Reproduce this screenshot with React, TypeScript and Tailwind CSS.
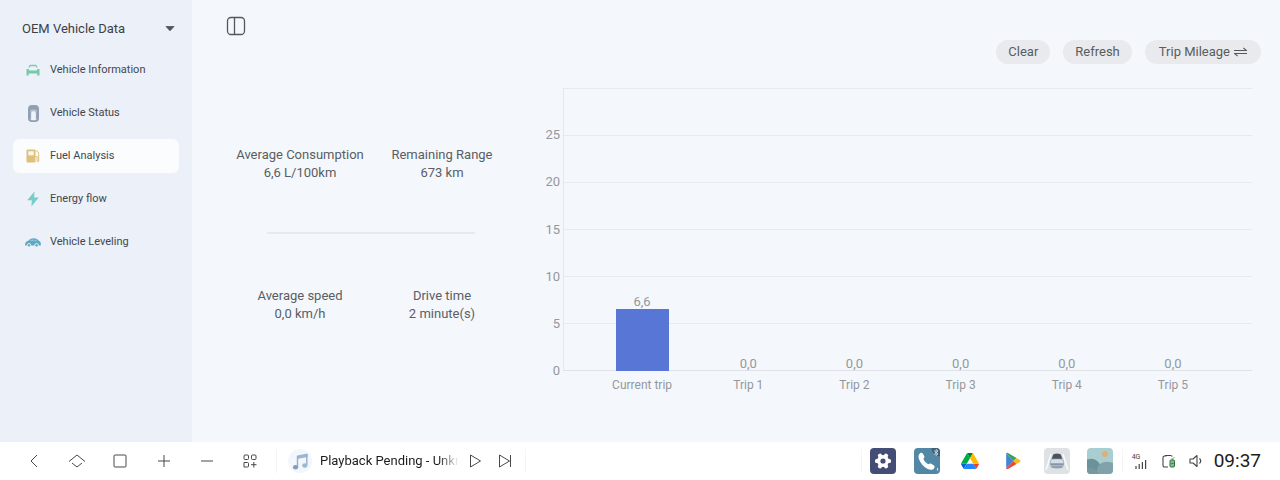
import React, { useState } from 'react'

const ICON = 'shrink-0'

const CarFrontIcon = () => (
  <svg className={ICON} width="18" height="18" viewBox="0 0 18 18" fill="none">
    <path d="M5.200 6 6 4.500h6L12.800 6" stroke="#7fcbb0" strokeWidth="1.400" strokeLinecap="round" strokeLinejoin="round" />
    <path d="M2.500 8h2l1 1.500h7l1-1.500h2v6.500h-2.200v-2H4.700v2H2.500z" fill="#78c8aa" />
  </svg>
)

const CarTopIcon = () => (
  <svg className={ICON} width="18" height="18" viewBox="0 0 18 18">
    <rect x="4" y="1" width="11" height="17" rx="4" fill="#929eb2" />
    <path d="M6 6.500c1.800-1.300 5.200-1.300 7 0L12.200 9v5l.8 1.500c-1.700 1.400-5.300 1.400-7 0l.8-1.500V9z" fill="#b9c3d2" />
    <path d="M7.200 16V9.500a2.300 2.300 0 0 1 4.600 0V16z" fill="#eef2f9" />
  </svg>
)

const FuelIcon = () => (
  <svg className={ICON} width="18" height="18" viewBox="0 0 18 18" fill="none">
    <path d="M3 3h8v12H3z" fill="#dfc27a" stroke="#dcc07a" strokeWidth="1" strokeLinejoin="round" />
    <path d="M4.300 4.300h5.400v4H4.300z" fill="#fbf7ea" />
    <path d="M12 3.500c1.600.6 2.700 2 2.700 4V14c0 1-1.600 1-1.600 0V9.500H11.500" stroke="#dcc07a" strokeWidth="1" />
  </svg>
)

const BoltIcon = () => (
  <svg className={ICON} width="18" height="18" viewBox="0 0 18 18">
    <path d="M10.400 1.500 3.200 10.200h4.600l-.4 6.300L14.800 7.600h-4.600z" fill="#7accc8" />
  </svg>
)

const CarSideIcon = () => (
  <svg className={ICON} width="18" height="18" viewBox="0 0 18 18">
    <path d="M1 12.600c0-3 1-4.300 3.400-4.800 2-2.200 4-2.800 6.600-2.400 2 .3 3.200 1.300 4.200 2.600 1.400.6 1.800 2 1.600 4.600z" fill="#5fa8c2" />
    <path d="M6 7.900c1-1 2.200-1.400 3.400-1.400v1.700zM10.300 6.500c1.200.1 2.200.7 2.900 1.600l-2.900.1z" fill="#8fc5d8" />
    <circle cx="5" cy="12.300" r="1.800" fill="#66adc6" stroke="#ecf1f9" strokeWidth=".9" />
    <circle cx="12.600" cy="12.300" r="1.800" fill="#66adc6" stroke="#ecf1f9" strokeWidth=".9" />
  </svg>
)

const menu = [
  { label: 'Vehicle Information', icon: <CarFrontIcon /> },
  { label: 'Vehicle Status', icon: <CarTopIcon /> },
  { label: 'Fuel Analysis', icon: <FuelIcon /> },
  { label: 'Energy flow', icon: <BoltIcon /> },
  { label: 'Vehicle Leveling', icon: <CarSideIcon /> },
]

const trips = [
  { label: 'Current trip', value: 6.6 },
  { label: 'Trip 1', value: 0 },
  { label: 'Trip 2', value: 0 },
  { label: 'Trip 3', value: 0 },
  { label: 'Trip 4', value: 0 },
  { label: 'Trip 5', value: 0 },
]

const CHART_MAX = 30
const ticks = [25, 20, 15, 10, 5, 0]

const formatValue = (value: number) => value.toFixed(1).replace('.', ',')

interface SidebarProps {
  active: string
  onSelect: (label: string) => void
}

const Sidebar: React.FC<SidebarProps> = ({ active, onSelect }) => (
  <aside className="w-48 shrink-0 bg-[#ebf0f9] px-[13px] pt-[17px]">
    <div className="flex items-center">
      <select
        aria-label="Data source"
        className="h-6 min-w-0 flex-1 appearance-none bg-transparent pl-[9px] text-[13px] text-[#3d4147] outline-none"
      >
        <option>OEM Vehicle Data</option>
      </select>
      <svg className="mr-1" width="10" height="6" viewBox="0 0 10 6">
        <path d="M1 .5h8L5 4.800z" fill="#505357" stroke="#505357" strokeWidth=".8" strokeLinejoin="round" />
      </svg>
    </div>
    <nav className="mt-3 flex flex-col gap-[9px]">
      {menu.map((item) => (
        <button
          key={item.label}
          onClick={() => onSelect(item.label)}
          className={`flex h-[34px] items-center gap-2 rounded-md pl-[11px] text-left text-[11px] text-[#43474d] ${
            item.label === active ? 'bg-[#fbfcfe]' : ''
          }`}
        >
          {item.icon}
          <span>{item.label}</span>
        </button>
      ))}
    </nav>
  </aside>
)

const Stat: React.FC<{ label: string; value: string }> = ({ label, value }) => (
  <div className="text-center text-[13px] leading-[18px] whitespace-nowrap text-[#5a5e63]">
    <p>{label}</p>
    <p>{value}</p>
  </div>
)

const Stats = () => (
  <section className="w-[284px] shrink-0 pt-[58px]">
    <div className="grid grid-cols-2">
      <Stat label="Average Consumption" value="6,6 L/100km" />
      <Stat label="Remaining Range" value="673 km" />
    </div>
    <hr className="mx-[38px] mt-[50px] mb-[53px] border-t-2 border-[#e6e9ee]" />
    <div className="grid grid-cols-2">
      <Stat label="Average speed" value="0,0 km/h" />
      <Stat label="Drive time" value="2 minute(s)" />
    </div>
  </section>
)

const TripChart = () => (
  <section className="flex flex-1 text-[13px] text-[#94979b]">
    <div className="flex w-[50px] shrink-0 flex-col pb-[23px]">
      {ticks.map((tick) => (
        <div key={tick} className="flex flex-1 items-end justify-end pr-[3px]">
          <span className="-mb-2 leading-4">{tick}</span>
        </div>
      ))}
    </div>
    <div className="flex flex-1 flex-col">
      <div className="grid flex-1">
        <div className="col-start-1 row-start-1 flex flex-col border-b border-l border-b-[#dfe2e7] border-l-[#e5e9ee]">
          {ticks.map((tick) => (
            <div key={tick} className="flex-1 border-t border-[#e7ebf0]" />
          ))}
        </div>
        <div className="col-start-1 row-start-1 flex px-[26px]">
          {trips.map((trip) => (
            <div key={trip.label} className="flex flex-1 flex-col items-center justify-end">
              <span className="leading-[14px]">{formatValue(trip.value)}</span>
              <div className="w-1/2 bg-[#5776d6]" style={{ height: `${(trip.value / CHART_MAX) * 100}%` }} />
            </div>
          ))}
        </div>
      </div>
      <div className="mt-[5px] flex px-[26px] text-center text-xs leading-[18px]">
        {trips.map((trip) => (
          <span key={trip.label} className="flex-1">
            {trip.label}
          </span>
        ))}
      </div>
    </div>
  </section>
)

const PILL = 'h-6 rounded-full bg-[#e8eaed] text-[13px] text-[#595c60]'

const Toolbar = () => (
  <header className="flex items-start justify-between pr-[19px] pl-[34px]">
    <button aria-label="Toggle sidebar" className="mt-4">
      <svg width="20" height="20" viewBox="0 0 20 20" fill="none" stroke="#54575c" strokeWidth="1.300">
        <rect x="1.500" y="1.500" width="17" height="17" rx="3.500" />
        <path d="M8.500 1.500v17" />
      </svg>
    </button>
    <div className="mt-10 flex gap-[13px]">
      <button className={`${PILL} px-3`}>Clear</button>
      <button className={`${PILL} px-3`}>Refresh</button>
      <button className={`${PILL} flex items-center gap-1 px-[14px]`}>
        Trip Mileage
        <svg width="13" height="10" viewBox="0 0 13 10" fill="none" stroke="#55585c" strokeWidth="1.100">
          <path d="M0 3.500h12.500L9.300.8M13 6.500H.5l3.200 2.700" />
        </svg>
      </button>
    </div>
  </header>
)

const line = { fill: 'none', stroke: '#47484b', strokeWidth: 1, width: 18, height: 18, viewBox: '0 0 18 18' }

const systemButtons = [
  { label: 'Back', icon: <svg {...line}><path d="M12 3 6 9l6 6" /></svg> },
  { label: 'Home', icon: <svg {...line}><path d="M1 9.500 9 3l8 6.500M4 11l5 4 5-4" /></svg> },
  { label: 'Recent apps', icon: <svg {...line}><rect x="3" y="3" width="12" height="12" rx="1" /></svg> },
  { label: 'Increase', icon: <svg {...line}><path d="M9 3v12M3 9h12" /></svg> },
  { label: 'Decrease', icon: <svg {...line}><path d="M3 9h12" /></svg> },
  {
    label: 'Add widget',
    icon: (
      <svg {...line}>
        <rect x="3" y="3" width="4.500" height="4.500" rx="1" />
        <rect x="10.500" y="3" width="4.500" height="4.500" rx="1" />
        <path d="M3 10.500h3.500a1 1 0 0 1 1 1V14a1 1 0 0 1-1 1H3zM12.800 10v5.500M10 12.700h5.500" />
      </svg>
    ),
  },
]

const SettingsApp = () => (
  <svg width="26" height="26" viewBox="0 0 26 26">
    <rect width="26" height="26" rx="4" fill="#434d75" />
    <g fill="#fff">
      <circle cx="13" cy="13" r="6" />
      <rect x="11" y="5" width="4" height="16" rx="1.500" transform="rotate(30 13 13)" />
      <rect x="11" y="5" width="4" height="16" rx="1.500" transform="rotate(90 13 13)" />
      <rect x="11" y="5" width="4" height="16" rx="1.500" transform="rotate(150 13 13)" />
    </g>
    <circle cx="13" cy="13" r="2.600" fill="#434d75" />
  </svg>
)

const PhoneApp = () => (
  <svg width="26" height="26" viewBox="0 0 26 26">
    <rect width="26" height="26" rx="4" fill="#5288a5" />
    <path d="M17.500 0H22a4 4 0 0 1 4 4v4.500a8.500 8.500 0 0 1-8.500-8.500z" fill="#3f6178" />
    <path d="m20 2.500 4 3.500-2 1.500v-6l2 1.500-4 3.500" fill="none" stroke="#dcebf3" strokeWidth=".8" />
    <path
      d="M5.200 6.200c1.300-1.800 2.900-1.800 3.900-.2l1.100 2c.6 1.200.1 1.900-.8 2.700.8 2.300 2.700 4.500 5 5.600 1-.9 1.800-1.200 2.800-.6l2.500 1.600c1.300 1 1.200 2.500-.2 3.600-1.700 1.300-4 1-6.200-.2-3.800-2.100-6.900-5.600-8.300-9.500-.7-2-.7-3.700.2-5z"
      fill="#fff"
    />
    <path d="M23.500 20v2.500" stroke="#dcebf3" strokeWidth="1" />
  </svg>
)

const DriveApp = () => (
  <svg width="18" height="16" viewBox="0 0 87.300 78">
    <path d="m6.600 66.850 3.850 6.650c.8 1.400 1.950 2.500 3.300 3.300l13.750-23.800h-27.500c0 1.550.4 3.100 1.200 4.500z" fill="#0066da" />
    <path d="m43.650 25-13.750-23.800c-1.350.8-2.500 1.900-3.300 3.300l-25.400 44a9.060 9.060 0 0 0 -1.200 4.500h27.500z" fill="#00ac47" />
    <path d="m73.550 76.800c1.350-.8 2.500-1.900 3.300-3.300l1.600-2.750 7.650-13.250c.8-1.400 1.200-2.950 1.200-4.500h-27.502l5.852 11.500z" fill="#ea4335" />
    <path d="m43.650 25 13.750-23.800c-1.350-.8-2.900-1.200-4.500-1.200h-18.500c-1.600 0-3.150.45-4.500 1.200z" fill="#00832d" />
    <path d="m59.800 53h-32.300l-13.750 23.800c1.350.8 2.900 1.200 4.500 1.200h50.800c1.600 0 3.150-.45 4.500-1.200z" fill="#2684fc" />
    <path d="m73.400 26.500-12.700-22c-.8-1.400-1.950-2.500-3.300-3.300l-13.750 23.800 16.150 28h27.450c0-1.550-.4-3.100-1.200-4.500z" fill="#ffba00" />
  </svg>
)

const PlayStoreApp = () => (
  <svg width="16" height="18" viewBox="0 0 16 18">
    <path d="M1.200 1.500v15L8.500 9z" fill="#4285d4" />
    <path d="M1.200 1.500C1.500.6 2.300.6 3 1l8.500 4.900L8.500 9z" fill="#35a35a" />
    <path d="M1.200 16.500c.3.900 1.100.9 1.800.5l8.500-4.900L8.500 9z" fill="#e8473c" />
    <path d="m11.500 5.900 3.300 2c1 .6 1 1.600 0 2.200l-3.300 2L8.500 9z" fill="#f8bd1c" />
  </svg>
)

const VehicleApp = () => (
  <svg width="26" height="26" viewBox="0 0 26 26">
    <rect width="26" height="26" rx="4" fill="#dfe2e5" />
    <path d="M7 6 2 22M19 6l5 16" stroke="#f9fafb" strokeWidth="1.400" />
    <path d="M9 6.500C10 5 16 5 17 6.500l2 5c1.500 1 1.500 6 0 8-2 1.500-10 1.500-12 0-1.500-2-1.500-7 0-8z" fill="#aab6c2" />
    <path d="M9.300 6.500c1.200-1 6.200-1 7.400 0l1.500 4.300H7.800z" fill="#4c535b" />
    <path d="M7.500 11.800c3-.8 8-.8 11 0l.8 3.700H6.700z" fill="#d4dee7" />
    <path d="M6.500 15.500h13v1.200h-13z" fill="#77879a" />
    <path d="M8 18.500h10v1H8z" fill="#7d8b9b" />
  </svg>
)

const GalleryApp = () => (
  <svg width="26" height="26" viewBox="0 0 26 26">
    <defs>
      <clipPath id="gallery">
        <rect width="26" height="26" rx="4" />
      </clipPath>
    </defs>
    <g clipPath="url(#gallery)">
      <rect width="26" height="26" fill="#a9cdd1" />
      <circle cx="18" cy="6" r="3" fill="#e0af78" />
      <path d="M0 11.500c8-3 14 2 16 14.500H0z" fill="#6b9299" />
      <path d="M11 18c4-5 10-5 15-3v11H9z" fill="#7fa3a9" />
      <path d="M0 20c6-1 9 2 12 6H0z" fill="#76999f" />
    </g>
  </svg>
)

const apps = [
  { label: 'Settings', icon: <SettingsApp /> },
  { label: 'Phone', icon: <PhoneApp /> },
  { label: 'Drive', icon: <DriveApp /> },
  { label: 'Play Store', icon: <PlayStoreApp /> },
  { label: 'Vehicle', icon: <VehicleApp /> },
  { label: 'Gallery', icon: <GalleryApp /> },
]

const Divider = () => <div className="h-6 w-px shrink-0 bg-[#f3f4f6]" />

const MediaControls = () => (
  <div className="flex items-center">
    <svg className="mr-2 ml-[11px] shrink-0" width="24" height="24" viewBox="0 0 24 24">
      <circle cx="12" cy="12" r="12" fill="#f3f7fb" />
      <path d="M9 6.500 19.500 4.500V8L9 10z" fill="#9db4d2" />
      <path d="M9.500 7v11M18.800 5v11" stroke="#94aed0" strokeWidth="1.400" />
      <ellipse cx="7.500" cy="18.200" rx="2.600" ry="2.200" fill="#809dc6" />
      <ellipse cx="16.800" cy="16.500" rx="2.600" ry="2.200" fill="#9db7d6" />
    </svg>
    <p className="w-[139px] overflow-hidden mask-r-from-85% text-[13px] whitespace-nowrap text-[#1c1c1e]">
      Playback Pending - Unkn
    </p>
    <button aria-label="Play" className="ml-[7px]">
      <svg {...line}><path d="M4.500 3v12l10-6z" strokeLinejoin="round" /></svg>
    </button>
    <button aria-label="Next" className="mr-[11px] ml-3">
      <svg {...line}><path d="M3.500 3v12l10-6zM14.500 3v12" strokeLinejoin="round" /></svg>
    </button>
  </div>
)

const StatusIcons = () => (
  <div className="flex items-center gap-[11px] pl-[9px]">
    <div className="flex w-[17px] flex-col">
      <span className="text-[7px] leading-[6px] text-[#444]">4G</span>
      <svg className="ml-[3px]" width="12" height="9" viewBox="0 0 12 9" stroke="#444" strokeWidth="1.200">
        <path d="M1 6v3M4.200 4v5M7.400 2v7M10.600 0v9" />
      </svg>
    </div>
    <svg width="17" height="16" viewBox="0 0 17 16" fill="none">
      <path d="M8 14H4.500A1.500 1.500 0 0 1 3 12.500v-8A1.500 1.500 0 0 1 4.500 3h2M11 3h1.500M14 4.500V5M5 2.500h6" stroke="#444" strokeWidth="1.100" />
      <rect x="10" y="7" width="4.500" height="7" rx="1" fill="#7fbf8b" stroke="#34713f" />
      <path d="M11.500 6h2M11.500 10.500h2" stroke="#34713f" />
    </svg>
    <svg width="16" height="16" viewBox="0 0 16 16" fill="none" stroke="#444" strokeWidth="1.100">
      <path d="M2 6h3l4-3.500v11L5 10H2z" strokeLinejoin="round" />
      <path d="M11.500 5.500c1.500 1.500 1.500 3.500 0 5" />
    </svg>
  </div>
)

const SystemBar = () => (
  <footer className="flex h-[38px] shrink-0 items-center justify-between bg-white pr-[19px] pl-3">
    <div className="flex items-center">
      <div className="mr-1 grid w-[260px] grid-cols-6">
        {systemButtons.map((item) => (
          <button key={item.label} aria-label={item.label} className="flex justify-center">
            {item.icon}
          </button>
        ))}
      </div>
      <Divider />
      <MediaControls />
      <Divider />
    </div>
    <div className="flex items-center">
      <Divider />
      <div className="grid w-[260px] grid-cols-6">
        {apps.map((app) => (
          <button key={app.label} aria-label={app.label} className="flex items-center justify-center">
            {app.icon}
          </button>
        ))}
      </div>
      <Divider />
      <StatusIcons />
      <time className="ml-[10px] text-[19px] text-[#1c1c1e]">09:37</time>
    </div>
  </footer>
)

const App: React.FC = () => {
  const [active, setActive] = useState('Fuel Analysis')

  return (
    <div className="flex min-h-screen flex-col bg-[#f4f7fc] font-[Roboto,sans-serif]">
      <div className="flex flex-1">
        <Sidebar active={active} onSelect={setActive} />
        <main className="flex min-w-0 flex-1 flex-col">
          <Toolbar />
          <div className="mt-6 mb-12 flex flex-1 pr-7 pl-[37px]">
            <Stats />
            <TripChart />
          </div>
        </main>
      </div>
      <SystemBar />
    </div>
  )
}

export default App
